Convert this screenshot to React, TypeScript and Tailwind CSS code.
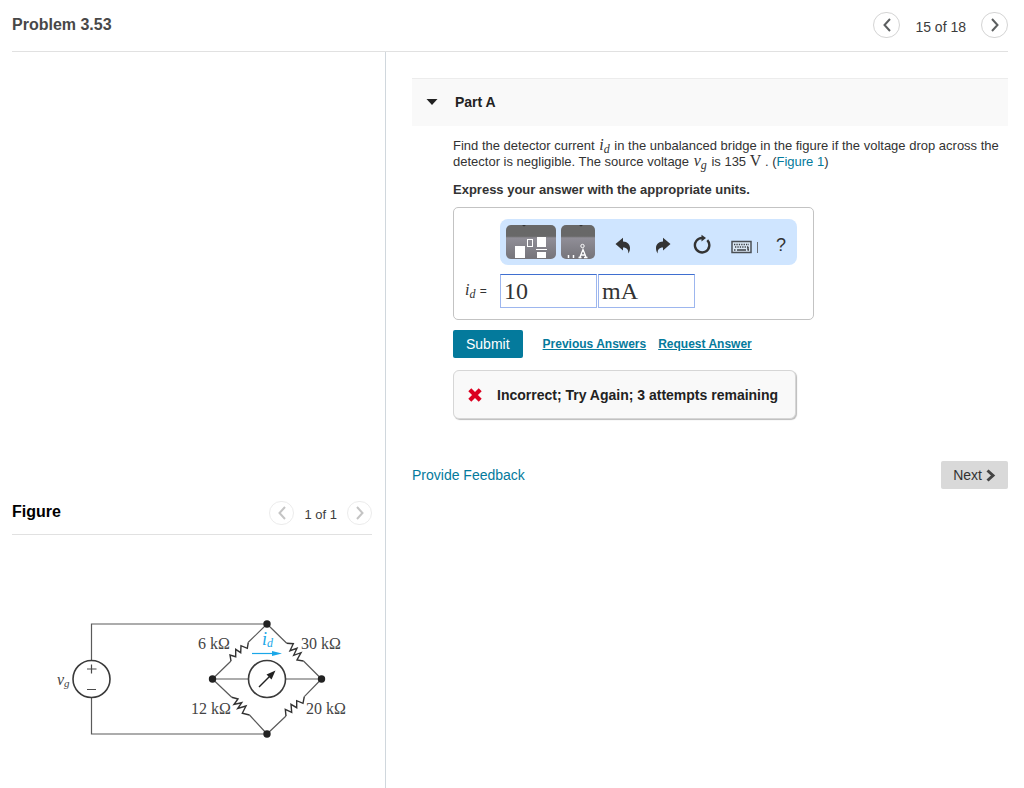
import React, { useState } from 'react'

interface PagerProps {
  label: string
  small?: boolean
}

function Chevron({ direction }: { direction: 'left' | 'right' }) {
  return (
    <svg viewBox="0 0 8 14" className="h-[14px] w-2" fill="none" stroke="currentColor" strokeWidth="2" aria-hidden="true">
      <path d={direction === 'left' ? 'M7 1 1.500 7 7 13' : 'M1 1l5.500 6L1 13'} />
    </svg>
  )
}

function Pager({ label, small }: PagerProps) {
  const button = small
    ? 'flex h-6 w-[25px] items-center justify-center rounded-full border border-[#ececec] text-[#c4c4c4]'
    : 'flex h-[26px] w-[27px] items-center justify-center rounded-full border border-[#d4d4d4] text-[#5c5f60]'

  return (
    <nav className={small ? 'flex items-center gap-[10px] text-[13px]' : 'flex items-center gap-[15px] text-sm'}>
      <button type="button" className={button} aria-label="Previous">
        <Chevron direction="left" />
      </button>
      <span className="pt-1 leading-4 text-[#3c3c3c]">{label}</span>
      <button type="button" className={button} aria-label="Next">
        <Chevron direction="right" />
      </button>
    </nav>
  )
}

function MathVar({ name, sub }: { name: string; sub: string }) {
  return (
    <span className="mx-px font-['Liberation_Serif',serif] text-base leading-[0px] italic">
      {name}
      <sub className="bottom-[-3px] text-xs leading-[0px]">{sub}</sub>
    </span>
  )
}

function TemplatesIcon() {
  return (
    <svg viewBox="0 0 50 34" className="h-[34px] w-[50px]" aria-hidden="true">
      <path d="M16 0h4l-2 1.500z" fill="#333" />
      <rect x="9" y="21" width="10" height="12" fill="#fff" />
      <rect x="21.500" y="14.500" width="5" height="7" fill="none" stroke="#fff" />
      <rect x="31" y="12" width="9" height="10" fill="#fff" />
      <rect x="30" y="24" width="11" height="1" fill="#fff" />
      <rect x="31" y="27" width="9" height="6" fill="#fff" />
    </svg>
  )
}

function UnitsIcon() {
  return (
    <svg viewBox="0 0 34 34" className="h-[34px] w-[34px]" aria-hidden="true">
      <path d="M18 0h4l-2 1.500z" fill="#333" />
      <path d="M7.500 30v3M12.500 30v3" stroke="#fff" strokeWidth="1.500" />
      <circle cx="21.500" cy="21" r="1.700" fill="none" stroke="#fff" />
      <path d="M17.500 32.500h3M23 32.500h3.500M19 32l3-7.500 3 7.500M20 30h4" fill="none" stroke="#fff" strokeWidth="1.300" />
    </svg>
  )
}

function UndoIcon() {
  return (
    <svg viewBox="0 0 16 18" className="h-[18px] w-4" fill="currentColor" aria-hidden="true">
      <path d="M.5 7 8 .8v3.700c4.500 0 7 3 7 6.500 0 2-.5 4-1.800 5.500.5-3.500-1.200-6-5.200-6v3z" />
    </svg>
  )
}

function RedoIcon() {
  return (
    <svg viewBox="0 0 16 18" className="h-[18px] w-4" fill="currentColor" aria-hidden="true">
      <path d="M15.500 7 8 .8v3.700c-4.500 0-7 3-7 6.500 0 2 .5 4 1.800 5.500-.5-3.500 1.200-6 5.200-6v3z" />
    </svg>
  )
}

function ResetIcon() {
  return (
    <svg viewBox="0 0 18 20" className="h-5 w-[18px]" aria-hidden="true">
      <path d="M14.300 6.200A7.200 7.200 0 1 1 9 4" fill="none" stroke="currentColor" strokeWidth="2.400" />
      <path d="m8.500.8 4.500 3.300-4.500 3.400z" fill="currentColor" />
    </svg>
  )
}

function KeyboardIcon() {
  return (
    <svg viewBox="0 0 28 14" className="h-[14px] w-7" aria-hidden="true">
      <rect x="1" y="1.500" width="19" height="11" fill="#dbe8f5" stroke="#4a4f55" strokeWidth="1.500" />
      <path d="M3 4.500h15M4 7h14" stroke="#3c4045" strokeWidth="1.300" strokeDasharray="1.300 1.100" />
      <path d="M3 10h1.500M6 10h9M16.500 10H18M17 7v3" stroke="#3c4045" strokeWidth="1.400" />
      <path d="M26.500 2v11" stroke="#6b7178" />
    </svg>
  )
}

function Circuit() {
  return (
    <svg
      viewBox="12 535 360 253"
      className="h-[253px] w-[360px]"
      fill="none"
      stroke="#5a5a5a"
      strokeWidth="1.200"
      role="img"
      aria-label="Unbalanced bridge circuit"
    >
      {/* source loop */}
      <path d="M91.500 660v-36H267M91.500 697v37H267" />
      <circle cx="91.500" cy="679" r="18.500" stroke="#3a3a3a" strokeWidth="1.600" />
      <path d="M87 669h9.500M91.500 664.500v9M87 689.500h9" stroke="#4a4a4a" />

      {/* bridge arms */}
      <path d="M267 624L248.300 642.300M231 661L212.500 679M267 624L286.700 643.300M303.500 661L321.500 679" />
      <path d="M212.500 679L231.700 697.300M249.500 715L267 734M321.500 679L304.300 696.700M286 716L267 734" />
      <g stroke="#333" strokeWidth="1.400">
        <path d="M248.300 642.300l-1 6-6.300-2.600-.3 7-5-3.400v7.400l-5.700-1.700 1 6" />
        <path d="M286.700 643.300l6.600.4-3.300 7 7-2.400-3.300 7 7.300-2.600-4 7.300 6.500 1" />
        <path d="M231.700 697.300l6.300 1.700-4 5.500 7.700-1.800-4 5.800 8.300-2.500-3.700 7.300 7.200 1.700" />
        <path d="M304.300 696.700l-1.300 6.600-6.300-2.600v7l-5.700-3.400.7 8-6.400-3 .7 6.700" />
      </g>
      <path d="M212.500 679H249M285 679h36.500" />

      {/* detector */}
      <circle cx="267" cy="679" r="18.500" fill="#fff" stroke="#3a3a3a" strokeWidth="1.600" />
      <path d="M259 687l11-11" stroke="#222" strokeWidth="1.500" />
      <path d="M275.500 670.500l-4 9-5-5z" fill="#222" stroke="none" />
      <path d="M252 653.500h21" stroke="#1aa7e8" />
      <path d="M282 653.500l-10-2.500v5z" fill="#1aa7e8" stroke="none" />

      <g fill="#222" stroke="none">
        <circle cx="267" cy="624" r="3.700" />
        <circle cx="212.500" cy="679" r="3.700" />
        <circle cx="321.500" cy="679" r="3.700" />
        <circle cx="267" cy="734" r="3.700" />
      </g>

      <g className="font-['Liberation_Serif',serif] text-base" fill="#444" stroke="none">
        <text x="198" y="649">6 kΩ</text>
        <text x="301" y="649">30 kΩ</text>
        <text x="191" y="714">12 kΩ</text>
        <text x="306" y="714">20 kΩ</text>
        <text x="57" y="685" className="italic">
          v<tspan dy="2" className="text-[11px]">g</tspan>
        </text>
        <text x="262" y="645" className="text-lg italic" fill="#1aa7e8">
          i<tspan dy="2" className="text-xs">d</tspan>
        </text>
      </g>
    </svg>
  )
}

function AnswerBox() {
  const [value, setValue] = useState('10')
  const [units, setUnits] = useState('mA')

  const templateButton =
    'overflow-hidden rounded-[5px] bg-linear-to-b from-[#686868] from-33% via-[#908e97] via-38% to-[#75747a] to-100%'
  const input =
    "h-[34px] w-[97px] border border-[#9db6ee] border-t-[#3f6fd0] bg-white px-[3px] font-['Liberation_Serif',serif] text-2xl text-[#333] outline-none"

  return (
    <div className="w-[361px] rounded-[5px] border border-[#c3c3c3] pt-[11px] pr-4 pb-[11px] pl-[10px]">
      <div className="ml-9 flex h-[46px] items-center rounded-lg bg-[#cfe5ff] pl-[6px] text-[#333]">
        <div className="flex gap-[5px]">
          <button type="button" className={templateButton} aria-label="Templates">
            <TemplatesIcon />
          </button>
          <button type="button" className={templateButton} aria-label="Units">
            <UnitsIcon />
          </button>
        </div>
        <button type="button" className="ml-5 pt-2" aria-label="Undo">
          <UndoIcon />
        </button>
        <button type="button" className="ml-6 pt-2" aria-label="Redo">
          <RedoIcon />
        </button>
        <button type="button" className="ml-[22px] pt-1" aria-label="Reset">
          <ResetIcon />
        </button>
        <button type="button" className="ml-5 pt-[10px]" aria-label="Keyboard shortcuts">
          <KeyboardIcon />
        </button>
        <button type="button" className="ml-[17px] pt-[6px] text-lg" aria-label="Help">
          ?
        </button>
      </div>
      <div className="mt-[9px] flex items-center">
        <label htmlFor="answer-value" className="w-9 text-xs">
          <MathVar name="i" sub="d" /> =
        </label>
        <input id="answer-value" className={input} value={value} onChange={(e) => setValue(e.target.value)} />
        <input
          className={`${input} ml-px`}
          aria-label="Units"
          value={units}
          onChange={(e) => setUnits(e.target.value)}
        />
      </div>
    </div>
  )
}

export default function App() {
  return (
    <div className="flex min-h-screen flex-col bg-white font-['Liberation_Sans',Arial,sans-serif] text-sm text-[#333]">
      <header className="mr-4 ml-3 flex h-[52px] items-center justify-between border-b border-[#e1e1e1] pb-[2px]">
        <h1 className="text-base font-bold text-[#484848]">Problem 3.53</h1>
        <Pager label="15 of 18" />
      </header>

      <div className="flex flex-1">
        <aside className="flex w-[386px] shrink-0 flex-col justify-end border-r border-[#d0d7dd] pr-[13px] pl-3">
          <div className="flex h-[34px] items-start justify-between border-b border-[#e1e1e1]">
            <h2 className="text-base leading-[22px] font-bold text-black">Figure</h2>
            <Pager label="1 of 1" small />
          </div>
          <Circuit />
        </aside>

        <main className="mr-4 ml-[26px] flex-1 pt-[26px]">
          <section>
            <button
              type="button"
              className="flex h-12 w-full items-center border-t border-[#ececec] bg-[#f9f9f9] pb-[2px] pl-[14px] text-left font-bold text-[#222]"
            >
              <svg viewBox="0 0 12 6" className="mr-[17px] h-[6px] w-3" fill="#222" aria-hidden="true">
                <path d="M.5 0h11L6 6z" />
              </svg>
              Part A
            </button>

            <div className="pt-3 pl-[41px]">
              <p className="text-[13px] leading-4">
                Find the detector current <MathVar name="i" sub="d" /> in the unbalanced bridge in the figure if the
                voltage drop across the detector is negligible. The source voltage <MathVar name="v" sub="g" /> is 135{' '}
                <span className="font-['Liberation_Serif',serif] text-base leading-[0px]">V</span> . (
                <a href="#figure" className="text-[#047a9c]">Figure 1</a>)
              </p>
              <p className="mt-3 mb-[9px] text-[13px] leading-4 font-bold">
                Express your answer with the appropriate units.
              </p>

              <AnswerBox />

              <div className="mt-[10px] flex items-center text-xs font-bold text-[#047a9c]">
                <button type="button" className="mr-5 h-7 rounded-xs bg-[#047a9c] px-[13px] text-sm font-normal text-white">
                  Submit
                </button>
                <a href="#previous" className="mr-3 underline">Previous Answers</a>
                <a href="#request" className="underline">Request Answer</a>
              </div>

              <div className="mt-3 flex h-[49px] w-fit items-center rounded-md border border-[#d6d6d6] bg-[#f9f9f9] pr-[17px] pl-[14px] text-sm font-bold text-[#222] shadow-[1px_1px_1px_#bbb]">
                <svg viewBox="0 0 14 14" className="mr-[15px] h-[14px] w-[14px]" fill="none" stroke="#db0020" strokeWidth="4.200" aria-hidden="true">
                  <path d="M1.800 1.800l10.400 10.400M12.200 1.800 1.800 12.200" />
                </svg>
                Incorrect; Try Again; 3 attempts remaining
              </div>
            </div>
          </section>

          <div className="mt-[42px] flex items-center justify-between">
            <a href="#feedback" className="text-[#047a9c]">Provide Feedback</a>
            <button type="button" className="flex h-7 items-center gap-1 rounded-xs bg-[#d9d9d9] px-3 text-[#333]">
              Next
              <svg viewBox="0 0 10 13" className="h-[13px] w-[10px]" fill="none" stroke="#444" strokeWidth="3" aria-hidden="true">
                <path d="M1.500 1.500l5.500 5-5.500 5" />
              </svg>
            </button>
          </div>
        </main>
      </div>
    </div>
  )
}
